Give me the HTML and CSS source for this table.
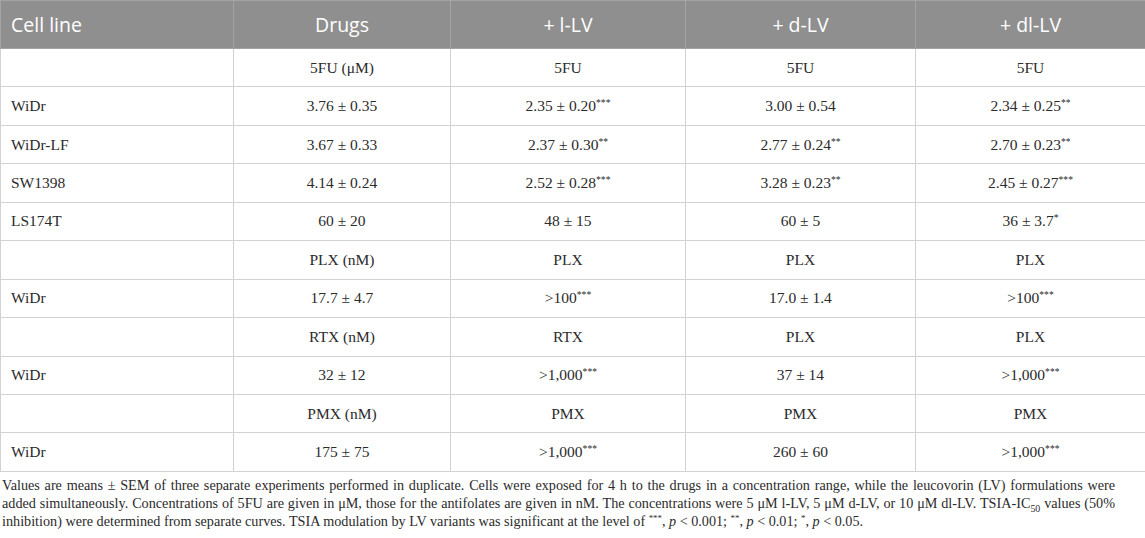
FILE: index.html
```html
<!DOCTYPE html>
<html>
    <head>
        <title>TSIA-IC50 values</title>
        <link rel="stylesheet" href="styles.css">
    </head>
    <body>
        <table class="data">
            <colgroup>
                <col class="colCell">
                <col class="colDrug">
                <col class="colL">
                <col class="colD">
                <col class="colDL">
            </colgroup>
            <tr class="head">
                <th class="first">Cell line</th>
                <th>Drugs</th>
                <th>+ l-LV</th>
                <th>+ d-LV</th>
                <th>+ dl-LV</th>
            </tr>
            <tr>
                <td class="first"></td>
                <td>5FU (μM)</td>
                <td>5FU</td>
                <td>5FU</td>
                <td>5FU</td>
            </tr>
            <tr>
                <td class="first">WiDr</td>
                <td>3.76 ± 0.35</td>
                <td>2.35 ± 0.20<sup>***</sup></td>
                <td>3.00 ± 0.54</td>
                <td>2.34 ± 0.25<sup>**</sup></td>
            </tr>
            <tr>
                <td class="first">WiDr-LF</td>
                <td>3.67 ± 0.33</td>
                <td>2.37 ± 0.30<sup>**</sup></td>
                <td>2.77 ± 0.24<sup>**</sup></td>
                <td>2.70 ± 0.23<sup>**</sup></td>
            </tr>
            <tr>
                <td class="first">SW1398</td>
                <td>4.14 ± 0.24</td>
                <td>2.52 ± 0.28<sup>***</sup></td>
                <td>3.28 ± 0.23<sup>**</sup></td>
                <td>2.45 ± 0.27<sup>***</sup></td>
            </tr>
            <tr>
                <td class="first">LS174T</td>
                <td>60 ± 20</td>
                <td>48 ± 15</td>
                <td>60 ± 5</td>
                <td>36 ± 3.7<sup>*</sup></td>
            </tr>
            <tr>
                <td class="first"></td>
                <td>PLX (nM)</td>
                <td>PLX</td>
                <td>PLX</td>
                <td>PLX</td>
            </tr>
            <tr>
                <td class="first">WiDr</td>
                <td>17.7 ± 4.7</td>
                <td>&gt;100<sup>***</sup></td>
                <td>17.0 ± 1.4</td>
                <td>&gt;100<sup>***</sup></td>
            </tr>
            <tr>
                <td class="first"></td>
                <td>RTX (nM)</td>
                <td>RTX</td>
                <td>PLX</td>
                <td>PLX</td>
            </tr>
            <tr>
                <td class="first">WiDr</td>
                <td>32 ± 12</td>
                <td>&gt;1,000<sup>***</sup></td>
                <td>37 ± 14</td>
                <td>&gt;1,000<sup>***</sup></td>
            </tr>
            <tr>
                <td class="first"></td>
                <td>PMX (nM)</td>
                <td>PMX</td>
                <td>PMX</td>
                <td>PMX</td>
            </tr>
            <tr>
                <td class="first">WiDr</td>
                <td>175 ± 75</td>
                <td>&gt;1,000<sup>***</sup></td>
                <td>260 ± 60</td>
                <td>&gt;1,000<sup>***</sup></td>
            </tr>
        </table>
        <p class="note">Values are means ± SEM of three separate experiments performed in duplicate. Cells were exposed for 4 h to the drugs in a concentration range, while the leucovorin (LV) formulations were added simultaneously. Concentrations of 5FU are given in μM, those for the antifolates are given in nM. The concentrations were 5 μM l-LV, 5 μM d-LV, or 10 μM dl-LV. TSIA-IC<sub>50</sub> values (50% inhibition) were determined from separate curves. TSIA modulation by LV variants was significant at the level of <sup>***</sup>, <i>p</i> &lt; 0.001; <sup>**</sup>, <i>p</i> &lt; 0.01; <sup>*</sup>, <i>p</i> &lt; 0.05.</p>
    </body>
</html>
```

FILE: styles.css
```css
body{
    margin: 0;
    background: #ffffff;
    color: #2b2b2b;
    font-family: "Liberation Serif", "Times New Roman", serif;
}

.data{
    width: 1145px;
    border-collapse: collapse;
    table-layout: fixed;
    font-size: 15.5px;
}

.colCell{ width: 233px; }
.colDrug{ width: 217px; }
.colL{ width: 235px; }
.colD{ width: 230px; }
.colDL{ width: 230px; }

.data th{
    height: 47px;
    padding: 0;
    background-color: #8f8f8f;
    color: #ffffff;
    font-family: "Open Sans", "Liberation Sans", sans-serif;
    font-weight: normal;
    font-size: 19.5px;
    text-align: center;
    border: 1px solid #a3a3a3;
}

.data td{
    height: 37.45px;
    padding: 0;
    text-align: center;
    border: 1px solid #d2d2d2;
}

.data .first{
    text-align: left;
    padding-left: 10px;
}

sup{
    font-size: 62%;
    line-height: 0;
    vertical-align: 0.55em;
}

sub{
    font-size: 70%;
    line-height: 0;
}

.note{
    margin: 4px 0 0 0;
    padding: 0 30px 0 2px;
    font-size: 14.2px;
    line-height: 18px;
    text-align: justify;
    color: #2b2b2b;
}
```
